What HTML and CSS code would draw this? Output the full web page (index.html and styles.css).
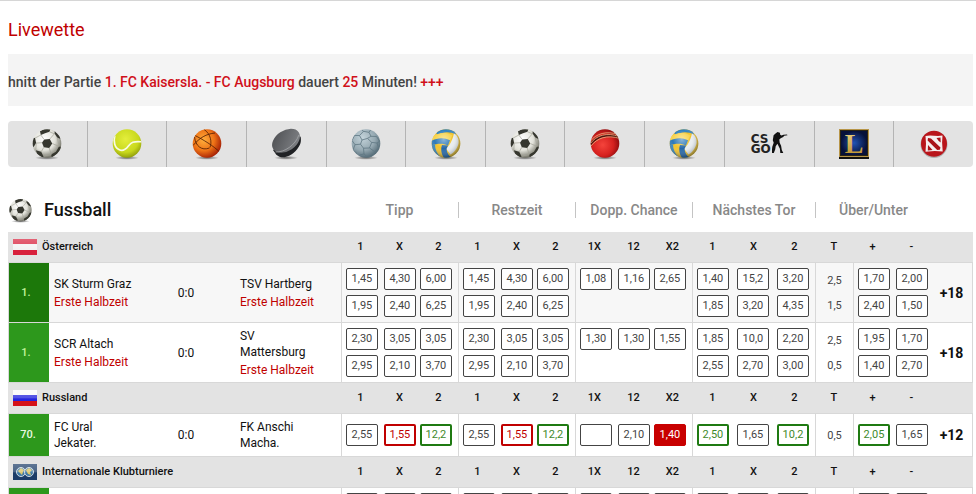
FILE: index.html
```
<!DOCTYPE html>
<html lang="de">
<head>
    <meta charset="UTF-8">
    <meta name="viewport" content="width=device-width, initial-scale=1.0">
    <title>Livewette</title>
    <link rel="stylesheet" href="styles.css">
</head>
<body>

    <!-- Shared icons -->
    <svg class="sprite" aria-hidden="true">
        <defs>
            <radialGradient id="gWhite" cx="40%" cy="35%" r="65%">
                <stop offset="0" stop-color="#ffffff"/><stop offset=".6" stop-color="#e2e2da"/><stop offset="1" stop-color="#77776c"/>
            </radialGradient>
            <radialGradient id="gTennis" cx="45%" cy="35%" r="65%">
                <stop offset="0" stop-color="#e4ee3c"/><stop offset=".7" stop-color="#c8d81c"/><stop offset="1" stop-color="#93a10c"/>
            </radialGradient>
            <radialGradient id="gBasket" cx="38%" cy="38%" r="68%">
                <stop offset="0" stop-color="#ffae3c"/><stop offset=".55" stop-color="#ee7316"/><stop offset="1" stop-color="#a01a04"/>
            </radialGradient>
            <radialGradient id="gHand" cx="38%" cy="30%" r="72%">
                <stop offset="0" stop-color="#c3d3da"/><stop offset=".6" stop-color="#96a9b2"/><stop offset="1" stop-color="#526975"/>
            </radialGradient>
            <radialGradient id="gCricket" cx="42%" cy="55%" r="62%">
                <stop offset="0" stop-color="#f5443c"/><stop offset=".6" stop-color="#d6211f"/><stop offset="1" stop-color="#850a0c"/>
            </radialGradient>
            <radialGradient id="gShade" cx="42%" cy="36%" r="64%">
                <stop offset="0" stop-color="#fff" stop-opacity=".45"/><stop offset=".5" stop-color="#fff" stop-opacity="0"/><stop offset="1" stop-color="#123" stop-opacity=".45"/>
            </radialGradient>
            <radialGradient id="gShadow">
                <stop offset="0" stop-color="#333" stop-opacity=".75"/><stop offset="1" stop-color="#333" stop-opacity="0"/>
            </radialGradient>
            <linearGradient id="gPuck" x1="0" y1="0" x2="1" y2="1">
                <stop offset="0" stop-color="#4b4d50"/><stop offset="1" stop-color="#85878b"/>
            </linearGradient>
            <radialGradient id="gLol">
                <stop offset="0" stop-color="#2154b5"/><stop offset="1" stop-color="#071139"/>
            </radialGradient>
            <linearGradient id="gGold" x1="0" y1="0" x2="0" y2="1">
                <stop offset="0" stop-color="#f0dc8c"/><stop offset="1" stop-color="#b78a24"/>
            </linearGradient>
            <linearGradient id="gGloss" x1="0" y1="0" x2="0" y2="1">
                <stop offset="0" stop-color="#fff" stop-opacity=".3"/><stop offset=".5" stop-color="#fff" stop-opacity=".2"/><stop offset=".55" stop-color="#fff" stop-opacity="0"/>
            </linearGradient>
            <clipPath id="ball"><circle cx="16" cy="15.5" r="14.3"/></clipPath>
        </defs>

        <symbol id="soccer" viewBox="0 0 32 32">
            <ellipse cx="16" cy="29.8" rx="12" ry="2" fill="url(#gShadow)"/>
            <circle cx="16" cy="15.5" r="14.3" fill="url(#gWhite)"/>
            <g clip-path="url(#ball)">
                <g fill="#36372f">
                    <path d="M13.2 11.6l5.6-.6 2.4 4.5-3 4.4-5.4-.6-1.8-4.6z"/>
                    <path d="M9 3.2L14.3.6l5.2.2-1 3-4.5 1.4L9.8 7z"/>
                    <path d="M23.8 3l4.7 4 1 4-3.3-1.4-2.6-4z"/>
                    <path d="M1 9.5l3 .6 1.2 5-2.6 4L1 18z"/>
                    <path d="M4.8 22.2l5.4 1.6 2.2 4.4-.4 2.4-5-2.6z"/>
                    <path d="M20.2 26.6l4.8-2.8 3-5.2 3 .4-3 7-7 4.6z"/>
                </g>
                <g fill="none" stroke="#a3a398" stroke-width=".7">
                    <path d="M13.2 11.6L9.8 7M18.8 11l4.6-5.2M21.2 15.5l7 2.9M18.2 19.9l2 6.7M12.8 19.3l-2.6 4.5M11 14.7l-5.8.4M18.5 3.8l4.9 2M26.2 9.6l2 8.8M12.4 28.2l7.8-1.6M5.2 15.1l-.4 7.1M9.8 7L4 10.1"/>
                </g>
            </g>
        </symbol>

        <symbol id="tennis" viewBox="0 0 32 32">
            <ellipse cx="16" cy="29.8" rx="12" ry="2" fill="url(#gShadow)"/>
            <circle cx="16" cy="15.5" r="14.3" fill="url(#gTennis)"/>
            <g clip-path="url(#ball)" fill="none" stroke="#f9fbe3" stroke-width="1.7">
                <path d="M3.8 7.5C2.4 13 3.2 20.5 9.4 22.2c7 1.4 7.4-6.6 12.4-8 3.6-1 6.5-.6 9-.4"/>
            </g>
        </symbol>

        <symbol id="basketball" viewBox="0 0 32 32">
            <ellipse cx="16" cy="29.8" rx="12" ry="2" fill="url(#gShadow)"/>
            <circle cx="16" cy="15.5" r="14.3" fill="url(#gBasket)"/>
            <g clip-path="url(#ball)" fill="none" stroke="#4b1b04" stroke-width=".8">
                <path d="M4 7.5c7 3.500 19 10.500 25 17M13 1.400c7 4.600 8 13 6 18M2 17.500c7-8 13-11.500 22-12.500M3.500 9c1 9 7 14 15 11"/>
            </g>
        </symbol>

        <symbol id="puck" viewBox="0 0 32 32">
            <ellipse cx="16" cy="29.8" rx="12" ry="2" fill="url(#gShadow)"/>
            <path d="M30.6 8.5c.6 3 .4 6-.7 8.3-3 6.2-9 11.4-15.4 12.4-3 .5-6-.7-8.2-2.5L3 22z" fill="#202225"/>
            <ellipse cx="16" cy="12.8" rx="15.3" ry="10.2" transform="rotate(-34 16 12.8)" fill="url(#gPuck)"/>
            <path d="M5.5 24c9 .5 20-7 23.4-17" fill="none" stroke="#a6a8ab" stroke-width=".8"/>
        </symbol>

        <symbol id="handball" viewBox="0 0 32 32">
            <ellipse cx="16" cy="29.8" rx="12" ry="2" fill="url(#gShadow)"/>
            <circle cx="16" cy="15.5" r="14.3" fill="url(#gHand)"/>
            <g clip-path="url(#ball)" fill="none" stroke="#607783" stroke-width=".8">
                <path d="M12 12l5.5-1.6 4.2 4-2.2 5.6-6 .2-3-4zM12 12L9.5 7.5l4-4.2 5.5 1 2 4-3.5 2.1M21 8.3l5.5.2 3 4.5M21.7 14.4l5.3.6 1.5 5-4 3.500-5-3.500M27 15l3-2M24.5 23.5l-2 4.500-5 1-3.500-3-.5-5.800M14 26l-4.500 1M10.500 16.200L5 16.700 3 22l4 3.500M5 16.700L2 12.500l2.500-5 5 0M13.500 3.300L11 1M19 4.300l2-3"/>
            </g>
        </symbol>

        <symbol id="volleyball" viewBox="0 0 32 32">
            <ellipse cx="16" cy="29.8" rx="12" ry="2" fill="url(#gShadow)"/>
            <g clip-path="url(#ball)">
                <path fill="#f2c32c" d="M0 0h32v32H0z"/>
                <path fill="#3282c0" d="M6 5C10 1 17-1 25 3l1 3.5C20 3.5 13 3.5 8 7z"/>
                <path fill="#f7d34c" d="M3 8.5c5-4 12-4.7 19.5-1.5L20 12.5c-6-3-12-2.3-18.5 1z"/>
                <path fill="#2d79b8" d="M1 13c7-3.5 13-3.7 19-.7l-2 5.2c-5-2.5-11-2-16.5 0z"/>
                <path fill="#e9edf0" d="M24 5.5c3 1.5 5 5 4.6 9.5-1 5.5-4.6 9.5-8.1 11.5L16 20.5c3-2.5 6-6.5 8-15z"/>
                <path fill="#2567a8" d="M12 17l6 .5-1.5 3.5c.5 4 2 6.5 5 8.5l-6 2c-3.5-3.5-5.5-9-3.5-14.5z"/>
                <path fill="#3585bd" d="M1 17.5l4-1c0 5 2 9 5.5 12.5L6 28c-3-3-5-7-5-10.5z"/>
            </g>
            <circle cx="16" cy="15.5" r="14.3" fill="url(#gShade)"/>
        </symbol>

        <symbol id="cricket" viewBox="0 0 32 32">
            <ellipse cx="16" cy="29.8" rx="12" ry="2" fill="url(#gShadow)"/>
            <circle cx="16" cy="15.5" r="14.3" fill="url(#gCricket)"/>
            <g clip-path="url(#ball)" fill="none">
                <path d="M1.5 16.5C7 8.500 18 5 31 9.500" stroke="#4f150e" stroke-width="2"/>
                <path d="M1 13.500C7 5.500 18 2.500 29 6.500M1.500 15.500C7 7.500 18 4 30 8.500M2 18C8 10 18 6.500 31 10.500" stroke="#e9b684" stroke-width=".8"/>
            </g>
        </symbol>

        <symbol id="flag-at" viewBox="0 0 24 16">
            <path fill="#d8213c" d="M0 0h24v16H0z"/>
            <path fill="#f3f3f3" d="M0 5h24v6H0z"/>
            <path fill="url(#gGloss)" d="M0 0h24v16H0z"/>
        </symbol>
        <symbol id="flag-ru" viewBox="0 0 24 16">
            <path fill="#fafafa" d="M0 0h24v5H0z"/>
            <path fill="#2525dd" d="M0 5h24v6H0z"/>
            <path fill="#d5121a" d="M0 11h24v5H0z"/>
            <path fill="url(#gGloss)" d="M0 0h24v16H0z"/>
        </symbol>
        <symbol id="flag-int" viewBox="0 0 24 16">
            <path fill="#1b3c68" d="M0 0h24v16H0z"/>
            <circle cx="8" cy="8" r="4.5" fill="#3f79a5" stroke="#d0dbe0"/>
            <circle cx="16" cy="8" r="4.5" fill="#3f79a5" stroke="#d0dbe0"/>
            <path fill="#dcc667" d="M5 7l3-3 3 2-1 2-1 3-2-2zM13 6l3-2 3 2-2 2 1 3-3-1z"/>
            <path fill="url(#gGloss)" d="M0 0h24v16H0z"/>
        </symbol>
    </svg>

    <main class="page">
        <h1>Livewette</h1>

        <div class="ticker">
            hnitt der Partie <em>1. FC Kaisersla. - FC Augsburg</em> dauert <em>25</em> Minuten! <em>+++</em>
        </div>

        <!-- Sport selection -->
        <nav class="sports">
            <a href="#" aria-label="Fussball"><svg><use href="#soccer"/></svg></a>
            <a href="#" aria-label="Tennis"><svg><use href="#tennis"/></svg></a>
            <a href="#" aria-label="Basketball"><svg><use href="#basketball"/></svg></a>
            <a href="#" aria-label="Eishockey"><svg><use href="#puck"/></svg></a>
            <a href="#" aria-label="Handball"><svg><use href="#handball"/></svg></a>
            <a href="#" aria-label="Volleyball"><svg><use href="#volleyball"/></svg></a>
            <a href="#" aria-label="Futsal"><svg><use href="#soccer"/></svg></a>
            <a href="#" aria-label="Cricket"><svg><use href="#cricket"/></svg></a>
            <a href="#" aria-label="Beachvolleyball"><svg><use href="#volleyball"/></svg></a>
            <a href="#" aria-label="Counter-Strike" class="wide">
                <span class="csgo">CS<br>GO</span>
                <svg viewBox="0 0 16 24">
                    <path d="M3.500 1.500l2-1.500 2.400.8.3 2 1.300.8 2-.9 3.500-.1.500.6-3.300.5-1 1.300-2.500 1.200-1.400 1.200.4 3.300 1.400 3 .7 4.200 1.500 3-3 .1-.4-4.200-2.500-5-1.700 2.500-.5 3.200-1.400 3.400-2.900.1.900-2 .5-4.200 1.400-4-.9-2.500.8-5z" fill="#111"/>
                </svg>
            </a>
            <a href="#" aria-label="League of Legends">
                <svg viewBox="0 0 32 32">
                    <path fill="#111" d="M1 28h30v3H1z"/>
                    <path fill="#b79548" d="M1 1h30v28H1z"/>
                    <path fill="#2a2413" d="M2 2h28v26H2z"/>
                    <path fill="url(#gLol)" d="M3 3h26v24H3z"/>
                    <text x="16" y="25" class="lol-text" text-anchor="middle" fill="url(#gGold)">L</text>
                </svg>
            </a>
            <a href="#" aria-label="Dota 2">
                <svg viewBox="0 0 32 32">
                    <circle cx="16" cy="16.5" r="13.5" fill="#8c8c8c" opacity=".6"/>
                    <circle cx="16" cy="15.8" r="13" fill="#b9151b"/>
                    <path fill="#f5eeee" d="M7.500 8l4.500-.6 8 .6 4.500-.5-.4 7 .6 9-8-.4-9.200.7.500-8z"/>
                    <path fill="#a91319" d="M10 10l3 .4 9.500 9.100-.7 2.300-2.600.2L9.600 12.500zM18.500 10l4-.5.200 5-2-1.500zM10 17l4.500 5-4.700.4z"/>
                </svg>
            </a>
        </nav>

        <table class="bets">
            <colgroup>
                <col class="c-min"><col><col class="c-score"><col class="c-away">
                <col class="c-odd" span="9">
                <col class="c-goal" span="3">
                <col class="c-line">
                <col class="c-odd" span="2">
                <col class="c-more">
            </colgroup>
            <thead>
                <tr>
                    <th colspan="4"><h2><svg><use href="#soccer"/></svg>Fussball</h2></th>
                    <th colspan="3"><span class="market">Tipp</span></th>
                    <th colspan="3"><span class="market line">Restzeit</span></th>
                    <th colspan="3"><span class="market line">Dopp. Chance</span></th>
                    <th colspan="3"><span class="market line">Nächstes Tor</span></th>
                    <th colspan="3"><span class="market line">Über/Unter</span></th>
                    <td></td>
                </tr>
            </thead>

            <!-- Österreich -->
            <tbody>
                <tr class="league">
                    <th colspan="4" class="name"><span><svg><use href="#flag-at"/></svg>Österreich</span></th>
                    <th>1</th><th>X</th><th>2</th>
                    <th>1</th><th>X</th><th>2</th>
                    <th>1X</th><th>12</th><th>X2</th>
                    <th>1</th><th>X</th><th>2</th>
                    <th>T</th><th>+</th><th>-</th><td></td>
                </tr>
                <tr class="match alt">
                    <td class="minute dark">1.</td>
                    <td class="team">SK Sturm Graz<span class="phase">Erste Halbzeit</span></td>
                    <td class="score">0:0</td>
                    <td class="team away">TSV Hartberg<span class="phase">Erste Halbzeit</span></td>
                    <td class="odd first"><button>1,45</button><button>1,95</button></td>
                    <td class="odd"><button>4,30</button><button>2,40</button></td>
                    <td class="odd last"><button>6,00</button><button>6,25</button></td>
                    <td class="odd first"><button>1,45</button><button>1,95</button></td>
                    <td class="odd"><button>4,30</button><button>2,40</button></td>
                    <td class="odd last"><button>6,00</button><button>6,25</button></td>
                    <td class="odd first"><button>1,08</button></td>
                    <td class="odd"><button>1,16</button></td>
                    <td class="odd last"><button>2,65</button></td>
                    <td class="odd first"><button>1,40</button><button>1,85</button></td>
                    <td class="odd"><button>15,2</button><button>3,20</button></td>
                    <td class="odd last"><button>3,20</button><button>4,35</button></td>
                    <td class="goals"><span>2,5</span><span>1,5</span></td>
                    <td class="odd first"><button>1,70</button><button>2,40</button></td>
                    <td class="odd"><button>2,00</button><button>1,50</button></td>
                    <td class="more"><a href="#">+18</a></td>
                </tr>
                <tr class="match">
                    <td class="minute">1.</td>
                    <td class="team">SCR Altach<span class="phase">Erste Halbzeit</span></td>
                    <td class="score">0:0</td>
                    <td class="team away">SV Mattersburg<span class="phase">Erste Halbzeit</span></td>
                    <td class="odd first"><button>2,30</button><button>2,95</button></td>
                    <td class="odd"><button>3,05</button><button>2,10</button></td>
                    <td class="odd last"><button>3,05</button><button>3,70</button></td>
                    <td class="odd first"><button>2,30</button><button>2,95</button></td>
                    <td class="odd"><button>3,05</button><button>2,10</button></td>
                    <td class="odd last"><button>3,05</button><button>3,70</button></td>
                    <td class="odd first"><button>1,30</button></td>
                    <td class="odd"><button>1,30</button></td>
                    <td class="odd last"><button>1,55</button></td>
                    <td class="odd first"><button>1,85</button><button>2,55</button></td>
                    <td class="odd"><button>10,0</button><button>2,70</button></td>
                    <td class="odd last"><button>2,20</button><button>3,00</button></td>
                    <td class="goals"><span>2,5</span><span>0,5</span></td>
                    <td class="odd first"><button>1,95</button><button>1,40</button></td>
                    <td class="odd"><button>1,70</button><button>2,70</button></td>
                    <td class="more"><a href="#">+18</a></td>
                </tr>
            </tbody>

            <!-- Russland -->
            <tbody>
                <tr class="league">
                    <th colspan="4" class="name"><span><svg><use href="#flag-ru"/></svg>Russland</span></th>
                    <th>1</th><th>X</th><th>2</th>
                    <th>1</th><th>X</th><th>2</th>
                    <th>1X</th><th>12</th><th>X2</th>
                    <th>1</th><th>X</th><th>2</th>
                    <th>T</th><th>+</th><th>-</th><td></td>
                </tr>
                <tr class="match single">
                    <td class="minute late">70.</td>
                    <td class="team">FC Ural Jekater.</td>
                    <td class="score">0:0</td>
                    <td class="team away">FK Anschi Macha.</td>
                    <td class="odd first"><button>2,55</button></td>
                    <td class="odd"><button class="down">1,55</button></td>
                    <td class="odd last"><button class="up">12,2</button></td>
                    <td class="odd first"><button>2,55</button></td>
                    <td class="odd"><button class="down">1,55</button></td>
                    <td class="odd last"><button class="up">12,2</button></td>
                    <td class="odd first"><button></button></td>
                    <td class="odd"><button>2,10</button></td>
                    <td class="odd last"><button class="picked">1,40</button></td>
                    <td class="odd first"><button class="up">2,50</button></td>
                    <td class="odd"><button>1,65</button></td>
                    <td class="odd last"><button class="up">10,2</button></td>
                    <td class="goals"><span>0,5</span></td>
                    <td class="odd first"><button class="up">2,05</button></td>
                    <td class="odd"><button>1,65</button></td>
                    <td class="more"><a href="#">+12</a></td>
                </tr>
            </tbody>

            <!-- Internationale Klubturniere -->
            <tbody>
                <tr class="league">
                    <th colspan="4" class="name"><span><svg><use href="#flag-int"/></svg>Internationale Klubturniere</span></th>
                    <th>1</th><th>X</th><th>2</th>
                    <th>1</th><th>X</th><th>2</th>
                    <th>1X</th><th>12</th><th>X2</th>
                    <th>1</th><th>X</th><th>2</th>
                    <th>T</th><th>+</th><th>-</th><td></td>
                </tr>
                <tr class="match">
                    <td class="minute"></td>
                    <td class="team"></td>
                    <td class="score"></td>
                    <td class="team away"></td>
                    <td class="odd first"><button></button></td>
                    <td class="odd"><button></button></td>
                    <td class="odd last"><button></button></td>
                    <td class="odd first"><button></button></td>
                    <td class="odd"><button></button></td>
                    <td class="odd last"><button></button></td>
                    <td class="odd first"><button></button></td>
                    <td class="odd"><button></button></td>
                    <td class="odd last"><button></button></td>
                    <td class="odd first"><button></button></td>
                    <td class="odd"><button></button></td>
                    <td class="odd last"><button></button></td>
                    <td class="goals"></td>
                    <td class="odd first"><button></button></td>
                    <td class="odd"><button></button></td>
                    <td class="more"></td>
                </tr>
            </tbody>
        </table>
    </main>

</body>
</html>
```
FILE: styles.css
```
/* Basic styling */
* {
    box-sizing: border-box;
}
body {
    margin: 0;
    height: 100vh;
    overflow: hidden;
    border-top: 1px solid #d6d6d6;
    background-color: #fff;
    color: #111;
    font-family: Roboto, Arial, sans-serif;
    font-size: 12px;
    line-height: 16px;
}
a {
    color: inherit;
    text-decoration: none;
}
.sprite {
    position: absolute;
    width: 0;
    height: 0;
}
.page {
    padding: 17px 3px 0 8px;
}
h1 {
    margin: 0 0 12px;
    color: #c00000;
    font-size: 18px;
    font-weight: 400;
    line-height: 24px;
}

/* News ticker */
.ticker {
    margin-bottom: 15px;
    padding: 16px 0 12px;
    overflow: hidden;
    background-color: #f4f4f4;
    color: #444;
    font-size: 14px;
    font-weight: 500;
    line-height: 24px;
    white-space: nowrap;
}
.ticker em {
    color: #d0101a;
    font-style: normal;
}

/* Sport selection */
.sports {
    display: flex;
    height: 46px;
    margin-bottom: 21px;
    border-radius: 4px;
    background-color: #e3e3e3;
}
.sports a {
    display: flex;
    flex: 1;
    align-items: center;
    justify-content: center;
    border-right: 1px solid #b4b4b4;
}
.sports a:last-child {
    border-right: none;
}
.sports .wide {
    flex: 0 0 90px;
    gap: 1px;
}
.sports svg {
    width: 32px;
    height: 32px;
}
.sports .wide svg {
    width: 16px;
    height: 24px;
}
.csgo {
    color: #222;
    font: bold 12px/10px "DejaVu Sans", sans-serif;
}
.lol-text {
    font: bold 28px "Liberation Serif", serif;
}

/* Bets table */
.bets {
    width: 100%;
    table-layout: fixed;
    border-spacing: 0;
}
.bets th,
.bets td {
    padding: 0;
}
.c-min { width: 41px; }
.c-score { width: 98px; }
.c-away { width: 106px; }
.c-odd { width: 39px; }
.c-goal { width: 41px; }
.c-line { width: 38px; }
.c-more { width: 42px; }

.bets thead th {
    height: 44px;
    text-align: center;
}
h2 {
    display: flex;
    align-items: center;
    gap: 11px;
    margin: 0;
    font-size: 18px;
    font-weight: 500;
    line-height: 24px;
}
h2 svg {
    width: 25px;
    height: 25px;
}
.market {
    display: block;
    color: #888;
    font-size: 14px;
    font-weight: 500;
}
.market.line {
    border-left: 1px solid #c4c4c4;
}

/* League rows */
.league th,
.league td {
    height: 31px;
    border-bottom: 1px solid #d8d8d8;
    background-color: #e3e3e3;
    font-size: 11px;
    font-weight: 500;
    text-align: center;
}
.league .name {
    padding-left: 5px;
}
.name span {
    display: flex;
    align-items: center;
    gap: 5px;
}
.name svg {
    width: 24px;
    height: 16px;
}

/* Match rows */
.match td {
    height: 60px;
    border-bottom: 1px solid #d8d8d8;
}
.match.alt {
    background-color: #f7f7f7;
}
.match.single td {
    height: 43px;
}
.match .minute {
    border-left: 1px solid #d8d8d8;
    background-color: #2d981c;
    color: #c4f59c;
    font-size: 11px;
    font-weight: 500;
    text-align: center;
    padding-right: 6px;
}
.match .dark {
    background-color: #1c780a;
}
.match .late {
    padding-right: 2px;
    color: #eaf8e0;
}
.match .team {
    padding: 0 1px 0 5px;
}
.match .away {
    padding-right: 20px;
}
.phase {
    display: block;
    margin-top: 2px;
    color: #c00000;
}
.score {
    text-align: center;
}
.match .odd {
    padding: 5px 0 0 4px;
    vertical-align: top;
}
.match .first {
    border-left: 1px solid #d8d8d8;
}
.match .last {
    padding: 5px 6px 0 0;
}
.match.single .odd {
    padding-top: 0;
    vertical-align: middle;
}
.odd button {
    display: block;
    width: 32px;
    height: 22px;
    margin: 0 0 5px;
    padding: 0 0 2px;
    border: 1px solid #444;
    border-radius: 2px;
    background-color: #fff;
    color: #444;
    font-family: inherit;
    font-size: 11px;
    text-align: center;
    cursor: pointer;
}
.odd button:last-child {
    margin-bottom: 0;
}
.last button {
    margin-left: auto;
}
.odd .down {
    border: 2px solid #c00000;
    color: #c00000;
}
.odd .up {
    border: 2px solid #1f7a12;
    color: #3f8a2c;
}
.odd .picked {
    border-color: #c80000;
    background-color: #c80000;
    color: #fff;
}
.match .goals {
    border-left: 1px solid #d8d8d8;
    color: #444;
    font-size: 11px;
    line-height: 25px;
    text-align: center;
}
.goals span {
    display: block;
}
.match .more {
    border-right: 1px solid #d8d8d8;
    font-size: 14px;
    font-weight: 700;
    text-align: center;
}
```
